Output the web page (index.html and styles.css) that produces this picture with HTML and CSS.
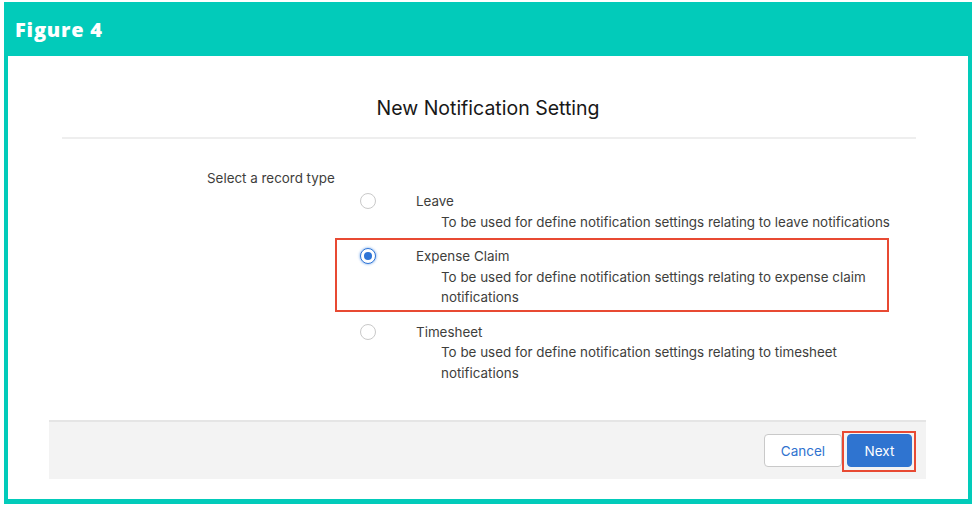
FILE: index.html
```html
<!DOCTYPE html>
<html lang="en">
<head>
<meta charset="utf-8">
<title>Figure 4</title>
<link rel="stylesheet" href="styles.css">
</head>
<body>
<div class="frame">
  <header class="fig-head">Figure 4</header>
  <main class="modal">
    <h1 class="modal-title">New Notification Setting</h1>
    <div class="divider"></div>
    <div class="form">
      <div class="form-label">Select a record type</div>
      <div class="options">
        <div class="option">
          <span class="radio"></span>
          <div class="opt-text">
            <div class="opt-label">Leave</div>
            <div class="opt-desc">To be used for define notification settings relating to leave notifications</div>
          </div>
        </div>
        <div class="option option-marked">
          <span class="radio radio-checked"></span>
          <div class="opt-text">
            <div class="opt-label">Expense Claim</div>
            <div class="opt-desc">To be used for define notification settings relating to expense claim notifications</div>
          </div>
        </div>
        <div class="option">
          <span class="radio"></span>
          <div class="opt-text">
            <div class="opt-label">Timesheet</div>
            <div class="opt-desc">To be used for define notification settings relating to timesheet notifications</div>
          </div>
        </div>
      </div>
    </div>
    <footer class="modal-footer">
      <button class="btn btn-neutral">Cancel</button>
      <span class="mark-box"><button class="btn btn-brand">Next</button></span>
    </footer>
  </main>
</div>
</body>
</html>
```

FILE: styles.css
```css
* { box-sizing: border-box; }
html, body { margin: 0; padding: 0; background: #ffffff; }
body {
  width: 976px;
  height: 508px;
  padding: 2px 4px 4px 4px;
  font-family: Inter, "Liberation Sans", sans-serif;
  color: #3e3e3c;
}
.frame {
  width: 968px;
  height: 502px;
  background: #02cbba;
  padding: 0 4px 5px 4px;
  display: flex;
  flex-direction: column;
}
.fig-head {
  height: 54px;
  display: flex;
  align-items: center;
  padding-left: 7px;
  color: #ffffff;
  font-family: "Open Sans", "Liberation Sans", sans-serif;
  font-weight: 800;
  font-size: 20px;
  letter-spacing: 0.8px;
}
.modal {
  flex: 1;
  background: #ffffff;
  display: flex;
  flex-direction: column;
  padding: 0 0 20px 0;
}
.modal-title {
  margin: 40px 0 0 0;
  text-align: center;
  font-size: 19.5px;
  line-height: 24px;
  font-weight: 400;
  color: #181818;
}
.divider {
  margin: 17px 52px 0 54px;
  height: 2px;
  background: #eeeeee;
}
.form {
  display: flex;
  flex-direction: column;
  padding-left: 199px;
  margin-top: 32px;
}
.form-label {
  font-size: 13.4px;
  line-height: 14px;
  color: #3e3e3c;
}
.options {
  display: flex;
  flex-direction: column;
  gap: 2px;
  margin-top: -2px;
  padding-left: 128px;
}
.option {
  width: 554px;
  border: 2px solid transparent;
  padding: 6px 0 2px 23px;
  display: flex;
  align-items: flex-start;
}
.option-marked { border-color: #e84a33; }
.radio {
  width: 16px;
  height: 16px;
  border-radius: 50%;
  border: 1px solid #c9c9c9;
  background: #ffffff;
  margin-top: 2px;
  flex: none;
  display: flex;
  align-items: center;
  justify-content: center;
}
.radio-checked {
  border-color: #2e74d6;
  box-shadow: 0 0 2px 1px rgba(90, 150, 230, 0.45);
}
.radio-checked::after {
  content: "";
  width: 8px;
  height: 8px;
  border-radius: 50%;
  background: #2e74d6;
}
.opt-text {
  margin-left: 40px;
  font-size: 13.4px;
  line-height: 20.5px;
}
.opt-label { color: #3e3e3c; }
.opt-desc {
  margin-left: 25px;
  width: 462px;
  color: #3e3e3c;
}
.modal-footer {
  margin: auto 42px 0 41px;
  height: 59px;
  background: #f3f3f3;
  border-top: 2px solid #e5e5e5;
  display: flex;
  justify-content: flex-end;
  align-items: center;
  padding-right: 10px;
}
.mark-box {
  display: flex;
  border: 2px solid #e84a33;
  padding: 1px 2px 3px 3px;
  margin-top: 2px;
}
.btn {
  height: 33px;
  border-radius: 4px;
  font-family: Inter, "Liberation Sans", sans-serif;
  font-size: 13.5px;
  padding: 0;
}
.btn-neutral {
  width: 78px;
  background: #ffffff;
  border: 1px solid #c9c9c9;
  color: #2f72cf;
}
.btn-brand {
  width: 65px;
  background: #2f74d0;
  border: 1px solid #2f74d0;
  color: #ffffff;
}
```
